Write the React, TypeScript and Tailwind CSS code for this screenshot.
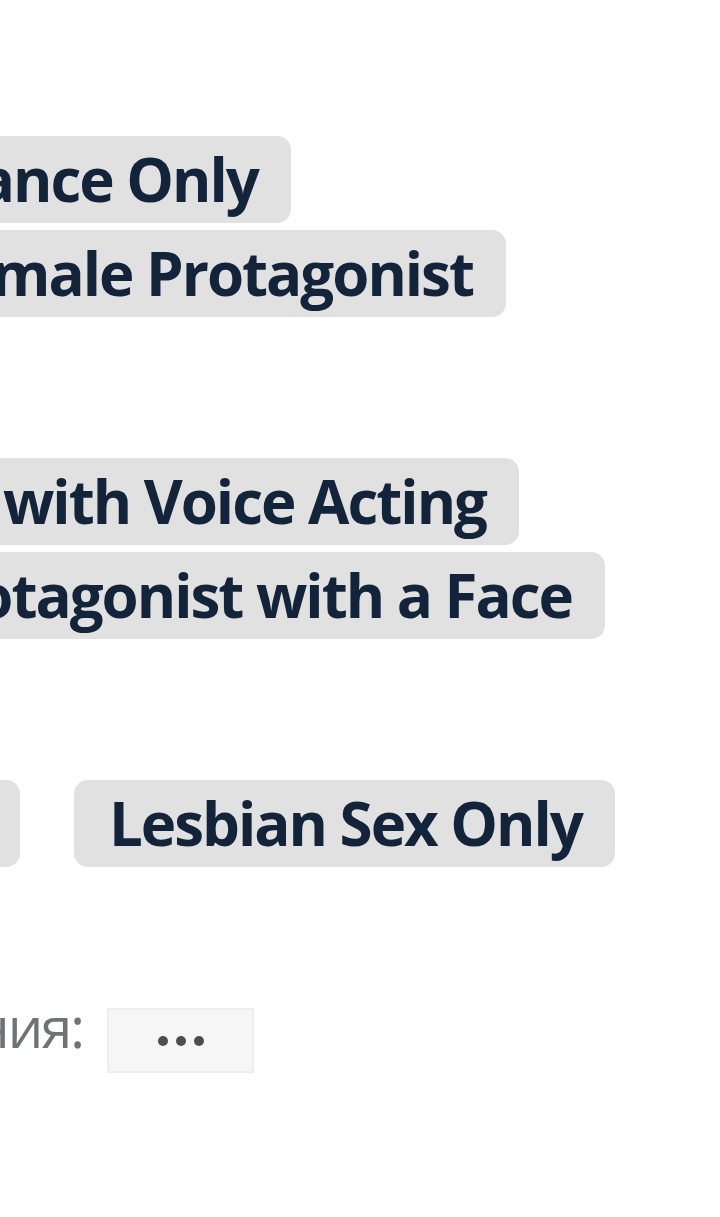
import type { ReactNode } from 'react'

function Tag({ children }: { children: ReactNode }) {
  return (
    <span className="shrink-0 whitespace-nowrap rounded-[14px] bg-[#e1e1e1] pl-[35px] pr-[33px] text-[60px] font-bold leading-[87px] tracking-[-2px] text-[#12233a]">
      {children}
    </span>
  )
}

export default function App() {
  return (
    <div
      className="min-h-[1217px] w-[720px] overflow-hidden bg-white"
      style={{ fontFamily: '"Open Sans", "Noto Sans", sans-serif' }}
    >
      <div className="flex flex-col pt-[136px]">
        {/* romance */}
        <div className="flex w-[291px] justify-end">
          <Tag>Romance Only</Tag>
        </div>
        <div className="mt-[7px] flex w-[506px] justify-end">
          <Tag>Female Protagonist</Tag>
        </div>

        {/* protagonist */}
        <div className="mt-[141px] flex w-[519px] justify-end">
          <Tag>Protagonist with Voice Acting</Tag>
        </div>
        <div className="mt-[7px] flex w-[605px] justify-end">
          <Tag>Protagonist with a Face</Tag>
        </div>

        {/* sex */}
        <div className="mt-[141px] flex w-[615px] justify-end gap-[54px]">
          <Tag>Straight Sex Only</Tag>
          <Tag>Lesbian Sex Only</Tag>
        </div>

        {/* more */}
        <div className="mt-[141px] flex w-[254px] items-start justify-end gap-[24px]">
          <span className="shrink-0 whitespace-nowrap text-[56px] leading-[36px] tracking-[-2px] text-[#6f7276]">
            Дополнения:
          </span>
          <button className="flex h-[65px] w-[147px] shrink-0 items-center justify-center gap-[8px] border-2 border-[#ededed] bg-[#f6f6f6]">
            <span className="size-[10px] rounded-full bg-[#4d4d4d]" />
            <span className="size-[10px] rounded-full bg-[#4d4d4d]" />
            <span className="size-[10px] rounded-full bg-[#4d4d4d]" />
          </button>
        </div>
      </div>
    </div>
  )
}
